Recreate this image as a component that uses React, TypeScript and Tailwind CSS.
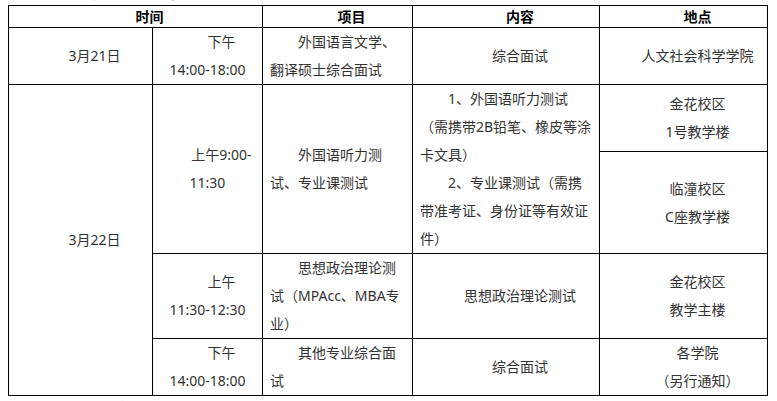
const cell = "flex flex-col justify-center border-r border-b border-black"
const center = `${cell} items-center px-[7px] text-center`
const left = `${cell} px-[7px] text-left`

function Line(props: { readonly children: React.ReactNode }) {
  return <p className="whitespace-nowrap indent-[28px] leading-[28px]">{props.children}</p>
}

export default function App() {
  return (
    <div className="h-[401px] w-[777px] overflow-hidden bg-white font-['Noto_Sans','Noto_Sans_CJK_SC',sans-serif] text-[14px] text-[#333]">
      <div className="h-[5px] overflow-hidden pl-[50px]">
        <p className="-mt-[17px] font-bold leading-[20px] text-black">（二）复试日程安排</p>
      </div>

      <div className="ml-[8px] grid w-[760px] grid-cols-[144px_110px_150px_187px_168px] grid-rows-[22px_57px_67px_102px_85px_57px] border-l border-t border-black">
        <div className={`${center} col-span-2 font-bold text-black`}>
          <p className="indent-[28px] leading-[21px]">时间</p>
        </div>
        <div className={`${center} font-bold text-black`}>
          <p className="indent-[28px] leading-[21px]">项目</p>
        </div>
        <div className={`${center} font-bold text-black`}>
          <p className="indent-[28px] leading-[21px]">内容</p>
        </div>
        <div className={`${center} font-bold text-black`}>
          <p className="indent-[28px] leading-[21px]">地点</p>
        </div>

        <div className={center}>
          <Line>3月21日</Line>
        </div>
        <div className={center}>
          <Line>
            下午
            <br />
            14:00-18:00
          </Line>
        </div>
        <div className={left}>
          <Line>
            外国语言文学、
            <br />
            翻译硕士综合面试
          </Line>
        </div>
        <div className={center}>
          <Line>综合面试</Line>
        </div>
        <div className={center}>
          <Line>人文社会科学学院</Line>
        </div>

        <div className={`${center} row-span-4`}>
          <Line>3月22日</Line>
        </div>
        <div className={`${center} row-span-2`}>
          <Line>
            上午9:00-
            <br />
            11:30
          </Line>
        </div>
        <div className={`${left} row-span-2`}>
          <Line>
            外国语听力测
            <br />
            试、专业课测试
          </Line>
        </div>
        <div className={`${left} row-span-2`}>
          <Line>
            1、外国语听力测试
            <br />
            （需携带2B铅笔、橡皮等涂
            <br />
            卡文具）
          </Line>
          <Line>
            2、专业课测试（需携
            <br />
            带准考证、身份证等有效证
            <br />
            件）
          </Line>
        </div>
        <div className={center}>
          <Line>金花校区</Line>
          <Line>1号教学楼</Line>
        </div>
        <div className={center}>
          <Line>临潼校区</Line>
          <Line>C座教学楼</Line>
        </div>

        <div className={center}>
          <Line>
            上午
            <br />
            11:30-12:30
          </Line>
        </div>
        <div className={left}>
          <Line>
            思想政治理论测
            <br />
            试（MPAcc、MBA专
            <br />
            业）
          </Line>
        </div>
        <div className={center}>
          <Line>思想政治理论测试</Line>
        </div>
        <div className={center}>
          <Line>金花校区</Line>
          <Line>教学主楼</Line>
        </div>

        <div className={center}>
          <Line>
            下午
            <br />
            14:00-18:00
          </Line>
        </div>
        <div className={left}>
          <Line>
            其他专业综合面
            <br />
            试
          </Line>
        </div>
        <div className={center}>
          <Line>综合面试</Line>
        </div>
        <div className={center}>
          <Line>各学院</Line>
          <Line>（另行通知）</Line>
        </div>
      </div>

      <p className="pl-[72px] pt-[2px] font-bold leading-[20px] text-[#c00000]">五、体检</p>
    </div>
  )
}
